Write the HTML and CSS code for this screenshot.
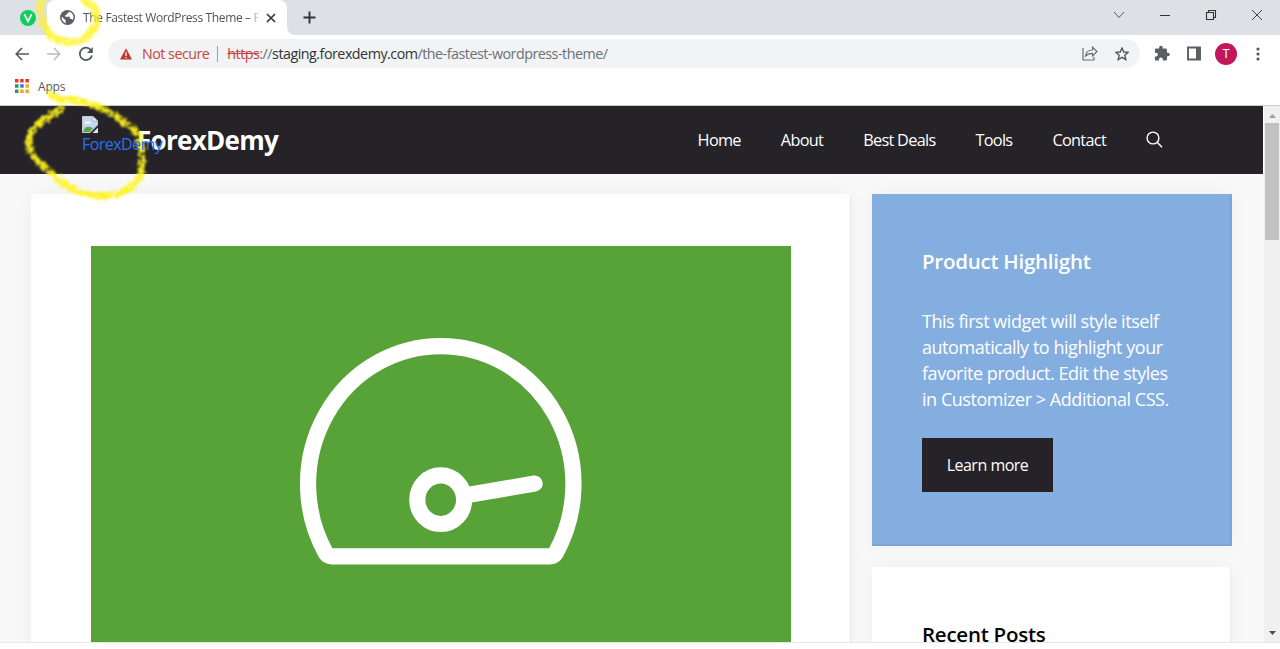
FILE: index.html
```html
<!DOCTYPE html>
<html lang="en">
<head>
  <meta charset="UTF-8">
  <meta name="viewport" content="width=device-width, initial-scale=1.0">
  <title>The Fastest WordPress Theme – ForexDemy</title>
  <link rel="stylesheet" href="styles.css">
</head>
<body>

  <!-- Browser tabs -->
  <div class="tab-strip">
    <svg class="pinned" width="16" height="16" viewBox="0 0 16 16">
      <circle cx="8" cy="8" r="8" fill="#0fcf5c"/>
      <path d="M4.3 4.2 8 11.4 11.7 4.2" fill="none" stroke="#fff" stroke-width="1.800"/>
    </svg>
    <div class="tab">
      <svg width="15" height="15" viewBox="0 0 24 24">
        <circle cx="12" cy="12" r="12" fill="#5b6066"/>
        <path d="M2.6 10.5 9 16.4v4.900C5 20 2.200 16 2.600 10.500zM14 2.500c.2 2-.8 3-2.500 3.200-.3 2-1.500 2.300-3.200 2.500v2.500h6.500c1 0 1.500 2.300 1.500 3.800h2.200c1.200 0 1.700 1 1.800 1.800 3-5 1-11.500-6.300-13.800z" fill="#fff"/>
      </svg>
      <span class="tab-title">The Fastest WordPress Theme – ForexDemy</span>
      <svg class="tab-close" width="10" height="10" viewBox="0 0 10 10"><path d="M1 1l8 8M9 1 1 9" stroke="#333639" stroke-width="1.700"/></svg>
    </div>
    <svg class="tab-foot" width="8" height="8" viewBox="0 0 8 8"><path d="M0 0a8 8 0 0 0 8 8H0z" fill="#fff"/></svg>
    <svg class="new-tab" width="13" height="13" viewBox="0 0 13 13"><path d="M6.500 .5v12M.5 6.500h12" stroke="#303337" stroke-width="1.900"/></svg>
    <div class="window-buttons">
      <svg width="12" height="12" viewBox="0 0 12 12"><path d="M1 3l5 5.500L11 3" fill="none" stroke="#55585c"/></svg>
      <svg width="12" height="12" viewBox="0 0 12 12"><path d="M1 6.500h10" stroke="#333"/></svg>
      <svg width="12" height="12" viewBox="0 0 12 12"><path d="M1.500 3.500h7v7h-7zM3.500 3.500v-2h7v7h-2" fill="none" stroke="#333" stroke-width="1.100"/></svg>
      <svg width="12" height="12" viewBox="0 0 12 12"><path d="M1 1l10 10M11 1 1 11" stroke="#444"/></svg>
    </div>
  </div>

  <!-- Address bar -->
  <div class="toolbar">
    <svg width="14" height="14" viewBox="0 0 14 14"><path d="M14 7H1.500M7 1 1.200 7 7 13" fill="none" stroke="#55585d" stroke-width="1.600"/></svg>
    <svg width="14" height="14" viewBox="0 0 14 14"><path d="M0 7h12.500M7 1l5.800 6L7 13" fill="none" stroke="#b9bbbe" stroke-width="1.500"/></svg>
    <svg class="reload" width="16" height="16" viewBox="0 0 16 16"><path d="M13.200 4.400A6.200 6.200 0 1 0 14 9.500" fill="none" stroke="#55585d" stroke-width="1.700"/><path d="M14.800 1v6H9z" fill="#55585d"/></svg>
    <div class="address">
      <svg class="warning" width="12" height="12" viewBox="0 0 12 12"><path d="M6 .3 12 11.500H0z" fill="#c5352b"/><path d="M6 4v4M6 9v1.300" stroke="#f1f3f4" stroke-width="1.300"/></svg>
      <span class="not-secure">Not secure</span>
      <span class="divider"></span>
      <span class="url"><s>https</s>://<b>staging.forexdemy.com</b>/the-fastest-wordpress-theme/</span>
      <svg class="share" width="16" height="15" viewBox="0 0 16 15"><path d="M1 2v12h11v-3M3.500 10c.5-4 3-6 7-6V1.200L15 5.500 10.500 10V7.300c-3 0-5 .5-7 2.700z" fill="none" stroke="#6b6e73" stroke-width="1.200"/></svg>
      <svg class="star" width="14" height="14" viewBox="0 0 14 14"><path d="M7 1l1.800 4 4.300.4-3.300 2.900 1 4.300L7 10.300l-3.800 2.300 1-4.300L.9 5.400 5.200 5z" fill="none" stroke="#55585d" stroke-width="1.400"/></svg>
    </div>
    <div class="toolbar-actions">
      <svg width="22" height="17" viewBox="0 0 24 24"><path fill="#5b5e63" d="M20.500 11H19V7c0-1.100-.9-2-2-2h-4V3.500a2.500 2.500 0 0 0-5 0V5H4c-1.100 0-2 .9-2 2v3.800h1.500a2.700 2.700 0 0 1 0 5.400H2V20c0 1.100.9 2 2 2h3.800v-1.500a2.700 2.700 0 0 1 5.400 0V22H17c1.100 0 2-.9 2-2v-4h1.500a2.500 2.500 0 0 0 0-5z"/></svg>
      <svg width="14" height="15" viewBox="0 0 14 15"><path d="M1 1.500h12v12H1z" fill="#fff" stroke="#5b5e63" stroke-width="1.900"/><path d="M9 1h4v13H9z" fill="#5b5e63"/></svg>
      <span class="avatar">T</span>
      <svg width="4" height="14" viewBox="0 0 4 14"><g fill="#55585d"><circle cx="2" cy="2" r="1.600"/><circle cx="2" cy="7" r="1.600"/><circle cx="2" cy="12" r="1.600"/></g></svg>
    </div>
  </div>

  <div class="bookmarks">
    <svg width="14" height="14" viewBox="0 0 14 14">
      <path fill="#e2392f" d="M0 0h3.500v3.500H0zM5.200 0h3.500v3.500H5.200zM10.400 0h3.500v3.500h-3.500z"/>
      <path fill="#2c9c4b" d="M0 5.200h3.500v3.500H0zM0 10.400h3.500v3.500H0z"/>
      <path fill="#3079e0" d="M5.200 5.200h3.500v3.500H5.200z"/>
      <path fill="#f2a91c" d="M10.400 5.200h3.500v3.500h-3.500zM5.200 10.400h3.500v3.500H5.200zM10.400 10.400h3.500v3.500h-3.500z"/>
    </svg>
    <span>Apps</span>
  </div>

  <!-- Web page -->
  <div class="viewport">
    <div class="page">
      <header class="site-header">
        <div class="broken-logo">
          <svg width="16" height="17" viewBox="0 0 16 17">
            <path d="M.5.500h10.500L15.500 5v4L8 16.500H.5z" fill="#c5d5f5" stroke="#c6c9cd"/>
            <path d="M2.500 7.500c0-2 2-2.500 3-1.500 1-1.500 3.500-.5 3 1.500z" fill="#fff"/>
            <path d="M1 16c1-4.500 4-6 7-5l3 1L7.500 16z" fill="#4fa84a"/>
            <path d="M11 .5V5h4.500z" fill="#fff" stroke="#a5a8ad" stroke-width=".7"/>
            <path d="M16 11.500V17h-5.500z" fill="#dfe2e6"/>
          </svg>
          <span>ForexDemy</span>
        </div>
        <div class="site-title">ForexDemy</div>
        <nav class="main-nav">
          <a>Home</a>
          <a>About</a>
          <a>Best Deals</a>
          <a>Tools</a>
          <a>Contact</a>
          <svg width="17" height="17" viewBox="0 0 17 17"><circle cx="7" cy="7" r="5.900" fill="none" stroke="#fff" stroke-width="1.400"/><path d="M11.200 11.300 16 16.200" stroke="#fff" stroke-width="1.500"/></svg>
        </nav>
      </header>

      <div class="content">
        <article class="post">
          <svg class="featured" width="700" height="397" viewBox="0 0 700 397">
            <rect width="700" height="397" fill="#58a338"/>
            <g fill="none" stroke="#fff" stroke-width="16.200" stroke-linejoin="round" stroke-linecap="round">
              <path d="M240 310.300Q236.500 310 234.500 306.500A132.700 138 0 1 1 465 306.500Q463 310 459.500 310.300z"/>
              <ellipse cx="349.700" cy="253.700" rx="23.400" ry="24.300"/>
              <path d="M381 248.300 443.600 237.600"/>
            </g>
          </svg>
        </article>
        <aside class="sidebar">
          <section class="widget highlight">
            <h2>Product Highlight</h2>
            <p>This first widget will style itself<br>automatically to highlight your<br>favorite product. Edit the styles<br>in Customizer &gt; Additional CSS.</p>
            <a class="button">Learn more</a>
          </section>
          <section class="widget recent">
            <h2>Recent Posts</h2>
          </section>
        </aside>
      </div>
    </div>
    <div class="scrollbar">
      <svg width="7" height="4" viewBox="0 0 7 4"><path d="M0 4 3.500 0 7 4z" fill="#a0a0a0"/></svg>
      <div class="thumb"></div>
      <svg class="down" width="7" height="4" viewBox="0 0 7 4"><path d="M0 0l3.500 4L7 0z" fill="#505050"/></svg>
    </div>
  </div>

  <!-- Yellow crayon marks -->
  <svg class="marker" width="300" height="210" viewBox="0 0 300 210">
    <defs>
      <filter id="crayon" x="-10%" y="-10%" width="120%" height="120%" color-interpolation-filters="sRGB">
        <feTurbulence type="fractalNoise" baseFrequency=".25" numOctaves="2" seed="4" result="n"/>
        <feDisplacementMap in="SourceGraphic" in2="n" scale="7" xChannelSelector="R" yChannelSelector="G" result="d"/>
        <feColorMatrix in="n" values="0 0 0 0 0  0 0 0 0 0  0 0 0 0 0  0 0 0 4 -.9" result="m"/>
        <feComposite in="d" in2="m" operator="in"/>
        <feGaussianBlur stdDeviation=".8"/>
      </filter>
    </defs>
    <g filter="url(#crayon)" fill="none" stroke="#fff31c" stroke-linecap="round" stroke-linejoin="round">
      <path d="M42 2C39 13 42 29 52 36C63 45 80 44 90 34C101 20 98 4 84 1" stroke-width="8" opacity=".8"/>
      <path d="M51 94C57 101 67 99 78 101C97 104 119 115 138 134C141 144 145 160 141 172C136 185 124 195 104 196C83 196 67 189 50 172C37 162 29 151 29 142C30 126 45 118 61 109" stroke-width="7" opacity=".95"/>
    </g>
  </svg>

</body>
</html>
```
FILE: styles.css
```css
* {
  box-sizing: border-box;
}
body {
  position: relative;
  margin: 0;
  height: 649px;
  overflow: hidden;
  background: #fff;
  font-family: "Open Sans", "Noto Sans", sans-serif;
}
svg {
  display: block;
  flex: none;
}
span, a, .site-title {
  white-space: nowrap;
}

/* Tabs */
.tab-strip {
  display: flex;
  align-items: center;
  height: 35px;
  background: #dde1e6;
}
.pinned {
  margin-left: 20px;
}
.tab {
  display: flex;
  align-items: center;
  width: 240px;
  height: 35px;
  margin-left: 11px;
  padding: 0 11px 0 13px;
  background: #fff;
  border-radius: 8px 8px 0 0;
}
.tab-title {
  flex: none;
  width: 175px;
  margin-left: 8px;
  overflow: hidden;
  font-size: 12px;
  letter-spacing: -0.36px;
  color: #505357;
  -webkit-mask-image: linear-gradient(90deg, #000 165px, transparent 178px);
  mask-image: linear-gradient(90deg, #000 165px, transparent 178px);
}
.tab-close {
  margin-left: auto;
}
.tab-foot {
  align-self: flex-end;
}
.new-tab {
  margin-left: 8px;
}
.window-buttons {
  display: flex;
  gap: 34px;
  margin: -6px 17px 0 auto;
}

/* Toolbar */
.toolbar {
  display: flex;
  align-items: center;
  height: 37px;
  padding-left: 15px;
  gap: 18px;
}
.reload {
  margin-left: -1px;
}
.address {
  display: flex;
  align-items: center;
  width: 1032px;
  height: 29px;
  margin-left: -4px;
  padding: 0 11px 0 12px;
  border-radius: 15px;
  background: #f1f3f4;
  font-size: 14.3px;
}
.not-secure {
  margin-left: 10px;
  letter-spacing: -0.52px;
  color: #c5443b;
}
.divider {
  width: 1px;
  height: 16px;
  margin: 0 9px 0 8px;
  background: #9b9ea2;
}
.url {
  letter-spacing: -0.5px;
  color: #6c7074;
}
.url s {
  color: #c5443b;
}
.url b {
  font-weight: 400;
  color: #303337;
}
.share {
  margin-left: auto;
}
.star {
  margin-left: 17px;
}
.toolbar-actions {
  display: flex;
  align-items: center;
  margin-left: -7px;
}
.toolbar-actions svg + svg {
  margin-left: 14px;
}
.avatar {
  width: 22px;
  height: 22px;
  margin: 0 19px 0 14px;
  border-radius: 50%;
  background: #c2185b;
  color: #fff;
  font: 12px/22px Roboto, sans-serif;
  text-align: center;
}
.bookmarks {
  display: flex;
  align-items: center;
  gap: 9px;
  height: 34px;
  padding: 0 0 5px 15px;
  border-bottom: 1px solid #c9cacc;
  font-size: 12px;
  letter-spacing: -0.2px;
  color: #55585c;
}

/* Page */
.viewport {
  display: flex;
  height: 537px;
  overflow: hidden;
  border-bottom: 1px solid #e8e8e8;
}
.page {
  width: 1264px;
  background: #f9f9fa;
}
.site-header {
  display: flex;
  align-items: center;
  height: 67.5px;
  padding-left: 82px;
  border-right: 1px solid #fff;
  background: #252328;
}
/* alt text runs over the site title */
.broken-logo {
  position: relative;
  z-index: 1;
  width: 55px;
  height: 48px;
  color: #2c70ee;
  font-size: 16px;
  line-height: 22px;
  letter-spacing: -0.55px;
}
.broken-logo span {
  display: block;
}
.site-title {
  color: #fff;
  font-size: 26px;
  font-weight: 700;
  letter-spacing: -0.7px;
  line-height: 36px;
}
.main-nav {
  display: flex;
  align-items: center;
  margin: 0 100px 0 auto;
  gap: 40px;
  color: #fff;
  font-size: 16.3px;
  letter-spacing: -0.7px;
}
.content {
  display: flex;
  align-items: flex-start;
  padding: 20.500px 0 0 31px;
  gap: 22px;
}
.post {
  width: 819px;
  height: 500px;
  padding: 52px 0 0 60px;
  background: #fff;
  box-shadow: 1px 1px 1px #e9e9eb, 0 0 20px rgba(35, 35, 45, 0.05);
}
.sidebar {
  width: 360px;
}
.widget {
  padding-left: 50px;
  box-shadow: 0 0 20px rgba(35, 35, 45, 0.05);
}
.widget h2 {
  margin: 0;
  font-size: 20.5px;
  line-height: 28px;
  font-weight: 600;
  letter-spacing: -0.25px;
}
.highlight {
  height: 352px;
  padding-top: 53px;
  background: #84aedf;
  border-right: 2px solid #7ca5d5;
  border-bottom: 2px solid #7ca5d5;
  color: #fff;
}
.highlight p {
  margin: 33px 0 26.400px;
  font-size: 18px;
  line-height: 26px;
  letter-spacing: -0.46px;
}
.button {
  display: block;
  width: 131px;
  height: 54px;
  background: #252328;
  font-size: 16px;
  line-height: 54px;
  letter-spacing: -0.5px;
  text-align: center;
}
.recent {
  height: 120px;
  margin: 21px 1px 0 0;
  padding-top: 53px;
  background: #fff;
  border-right: 1px solid #ececee;
  color: #050505;
}
.scrollbar {
  display: flex;
  flex-direction: column;
  align-items: center;
  width: 16px;
  padding: 8px 0 7px;
  background: #f0f0f0;
}
.thumb {
  width: 14px;
  height: 117px;
  margin-top: 5px;
  background: #c1c1c1;
}
.scrollbar .down {
  margin-top: auto;
}
.marker {
  position: absolute;
  top: 0;
  left: 0;
  pointer-events: none;
}
```
